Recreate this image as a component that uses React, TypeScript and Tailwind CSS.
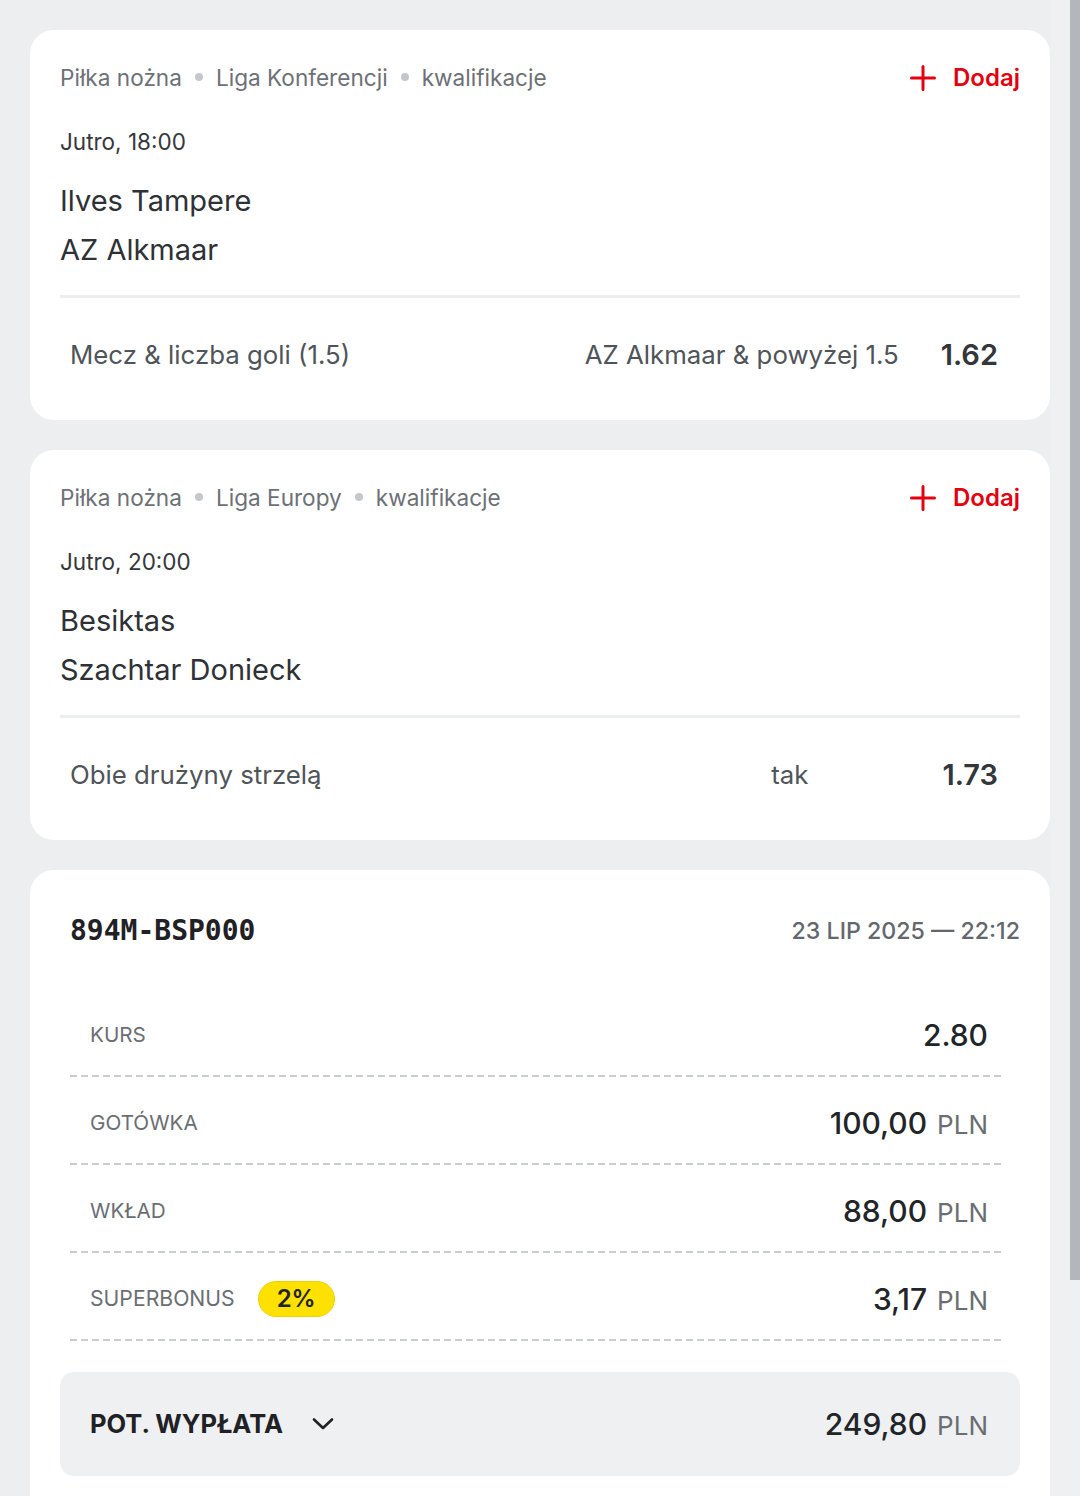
import React from "react";

const F = "font-['Inter','Noto_Sans',sans-serif]";

function Dot() {
  return <span className="inline-block w-[8px] h-[8px] rounded-full bg-[#c4c7cc] mx-[13px] relative top-[-1px]" />;
}

function EventCard(props: {
  league: string;
  time: string;
  home: string;
  away: string;
  market: string;
  selection: string;
  odds: string;
  selMr: string;
}) {
  return (
    <div className="bg-white rounded-[24px] px-[30px] pt-[32px] pb-[45px]">
      <div className="flex items-center justify-between h-[32px]">
        <div className="text-[22.6px] text-[#6d7177] flex items-center">
          <span>Piłka nożna</span>
          <Dot />
          <span>{props.league}</span>
          <Dot />
          <span>kwalifikacje</span>
        </div>
        <div className="flex items-center text-[#e3000f] font-semibold text-[24px]">
          <svg width="26" height="26" viewBox="0 0 26 26" className="mr-[17px]">
            <path d="M13 1.5V24.5M1.5 13H24.5" stroke="#e3000f" strokeWidth="3" strokeLinecap="round" />
          </svg>
          <span>Dodaj</span>
        </div>
      </div>
      <div className="mt-[33px] text-[22.5px] leading-[30px] text-[#35383c]">{props.time}</div>
      <div className="mt-[19px] text-[29px] leading-[49px] text-[#2e3135]">
        <div>{props.home}</div>
        <div>{props.away}</div>
      </div>
      <div className="mt-[21px] h-[3px] bg-[#eceef0]" />
      <div className="mt-[37px] h-[40px] flex items-center pl-[10px] pr-[22px]">
        <div className="flex-1 text-[25.8px] text-[#4f5459]">{props.market}</div>
        <div className={"text-[25.8px] text-[#4f5459] " + props.selMr}>{props.selection}</div>
        <div className="text-[29px] font-semibold text-[#33363a] ml-[41px]">{props.odds}</div>
      </div>
    </div>
  );
}

function Dash() {
  return <div className="h-[2px] bg-[repeating-linear-gradient(to_right,#c9ccd0_0_7px,transparent_7px_11px)]" />;
}

function Row(props: { label: React.ReactNode; value: string; pln?: boolean }) {
  return (
    <>
      <div className="h-[86px] pt-[6px] flex items-center justify-between pl-[20px] pr-[17px]">
        <div className="text-[20.7px] text-[#6a6e73] flex items-center">{props.label}</div>
        <div className="flex items-baseline">
          <span className="text-[30px] font-medium text-[#222528]">{props.value}</span>
          {props.pln && <span className="text-[26px] text-[#6a6e73] ml-[10px]">PLN</span>}
        </div>
      </div>
      <Dash />
    </>
  );
}

export default function App() {
  return (
    <div className={"flex bg-[#eceef0] min-h-[1496px] h-[1496px] overflow-hidden " + F}>
      <div className="w-[1050px] pl-[30px] pt-[30px] flex flex-col gap-[30px]">
        <EventCard
          league="Liga Konferencji"
          time="Jutro, 18:00"
          home="Ilves Tampere"
          away="AZ Alkmaar"
          market="Mecz & liczba goli (1.5)"
          selection="AZ Alkmaar & powyżej 1.5"
          odds="1.62"
          selMr="mr-[1px]"
        />
        <EventCard
          league="Liga Europy"
          time="Jutro, 20:00"
          home="Besiktas"
          away="Szachtar Donieck"
          market="Obie drużyny strzelą"
          selection="tak"
          odds="1.73"
          selMr="mr-[93px]"
        />
        <div className="bg-white rounded-t-[24px] px-[30px] pt-[41px] pb-[40px]">
          <div className="h-[40px] flex items-center justify-between">
            <div className="pl-[10px] text-[28px] font-bold text-[#1f2124] font-['DejaVu_Sans_Mono',monospace]">894M-BSP000</div>
            <div className="text-[23.2px] font-medium text-[#63676d]">23 LIP 2025 — 22:12</div>
          </div>
          <div className="mt-[38px] pl-[10px] pr-[15px]">
            <Row label="KURS" value="2.80" />
            <Row label="GOTÓWKA" value="100,00" pln />
            <Row label="WKŁAD" value="88,00" pln />
            <Row
              label={
                <>
                  <span className="text-[21.2px]">SUPERBONUS</span>
                  <span className="ml-[23px] h-[36px] px-[18px] rounded-full bg-[#ffe100] border border-[#f0cf00] text-[24px] font-semibold text-[#222] flex items-center">2%</span>
                </>
              }
              value="3,17"
              pln
            />
          </div>
          <div className="mt-[31px] h-[104px] bg-[#eef0f2] rounded-[14px] flex items-center justify-between pl-[30px] pr-[32px]">
            <div className="flex items-center">
              <span className="text-[25.5px] font-bold text-[#1f2124]">POT. WYPŁATA</span>
              <svg width="22" height="14" viewBox="0 0 22 14" className="ml-[29px]">
                <path d="M2 2.5L11 11L20 2.5" stroke="#1f2124" strokeWidth="2.6" fill="none" strokeLinecap="round" strokeLinejoin="round" />
              </svg>
            </div>
            <div className="flex items-baseline">
              <span className="text-[30px] font-medium text-[#222528]">249,80</span>
              <span className="text-[26px] text-[#6a6e73] ml-[10px]">PLN</span>
            </div>
          </div>
          <div className="h-[200px]" />
        </div>
      </div>
      <div className="w-[30px] flex">
        <div className="w-[20px] bg-[#eff0f2]" />
        <div className="w-[10px] flex flex-col">
          <div className="h-[1280px] bg-[#b3b6ba]" />
          <div className="flex-1 bg-[#eff0f2]" />
        </div>
      </div>
    </div>
  );
}
